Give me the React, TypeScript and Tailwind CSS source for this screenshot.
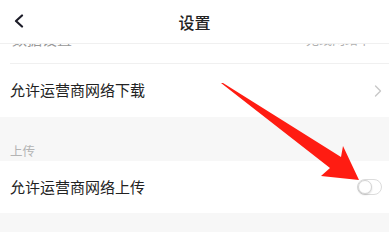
export default function App() {
  return (
    <div
      className="relative w-[389px] h-[232px] overflow-hidden bg-[#f7f7f7] text-[#222]"
      style={{ fontFamily: '"Noto Sans CJK SC", "Noto Sans", sans-serif' }}
    >
      {/* 顶栏 */}
      <div className="relative z-10 h-[44px] bg-white border-b border-[#f0f0f0] flex items-center justify-center">
        <svg className="absolute left-[13px] top-[14px]" width="12" height="14" viewBox="0 0 12 14">
          <path d="M9 1.5 L3 7 L9 12.5" fill="none" stroke="#1c1c28" strokeWidth="2.2" strokeLinecap="round" strokeLinejoin="round" />
        </svg>
        <span className="text-[16px] font-medium leading-none">设置</span>
      </div>

      {/* 被顶栏遮住一半的行 */}
      <div className="bg-white h-[19px] overflow-hidden flex justify-between px-[12px]">
        <span className="text-[15px] leading-[20px] -mt-[15px] text-[#999]">数据设置</span>
        <span className="text-[13px] leading-[20px] -mt-[15px] text-[#b0b0b0] pr-[6px]">无线网络下</span>
      </div>

      <div className="bg-white pl-[10px]">
        <div className="h-px bg-[#f0f0f0]" />
      </div>

      <div className="bg-white h-[53px] flex items-center justify-between pl-[10px] pr-[7px]">
        <span className="text-[15px]">允许运营商网络下载</span>
        <svg width="8" height="12" viewBox="0 0 8 12">
          <path d="M1.5 1 L6.5 6 L1.5 11" fill="none" stroke="#c8c8c8" strokeWidth="1.4" strokeLinecap="round" strokeLinejoin="round" />
        </svg>
      </div>

      <div className="h-[44px] flex items-end pl-[10px] pb-[1px]">
        <span className="text-[12.5px] text-[#b4b4b4] leading-[18px]">上传</span>
      </div>

      <div className="bg-white h-[52px] flex items-center justify-between pl-[10px] pr-[7px]">
        <span className="text-[15px]">允许运营商网络上传</span>
        <div className="w-[25px] h-[16px] rounded-full border border-[#dcdcdc] bg-white flex items-center">
          <div className="w-[14px] h-[14px] rounded-full border border-[#d4d4d4] bg-white shadow-[0_1px_2px_rgba(0,0,0,0.15)]" />
        </div>
      </div>

      {/* 红色箭头标注 */}
      <svg className="absolute left-0 top-0 z-20 pointer-events-none" width="389" height="232" viewBox="0 0 389 232">
        <polygon points="221,83 223,83 341,157 343,146 359,180 321,176 330,168" fill="#ff1c12" />
      </svg>
    </div>
  );
}
